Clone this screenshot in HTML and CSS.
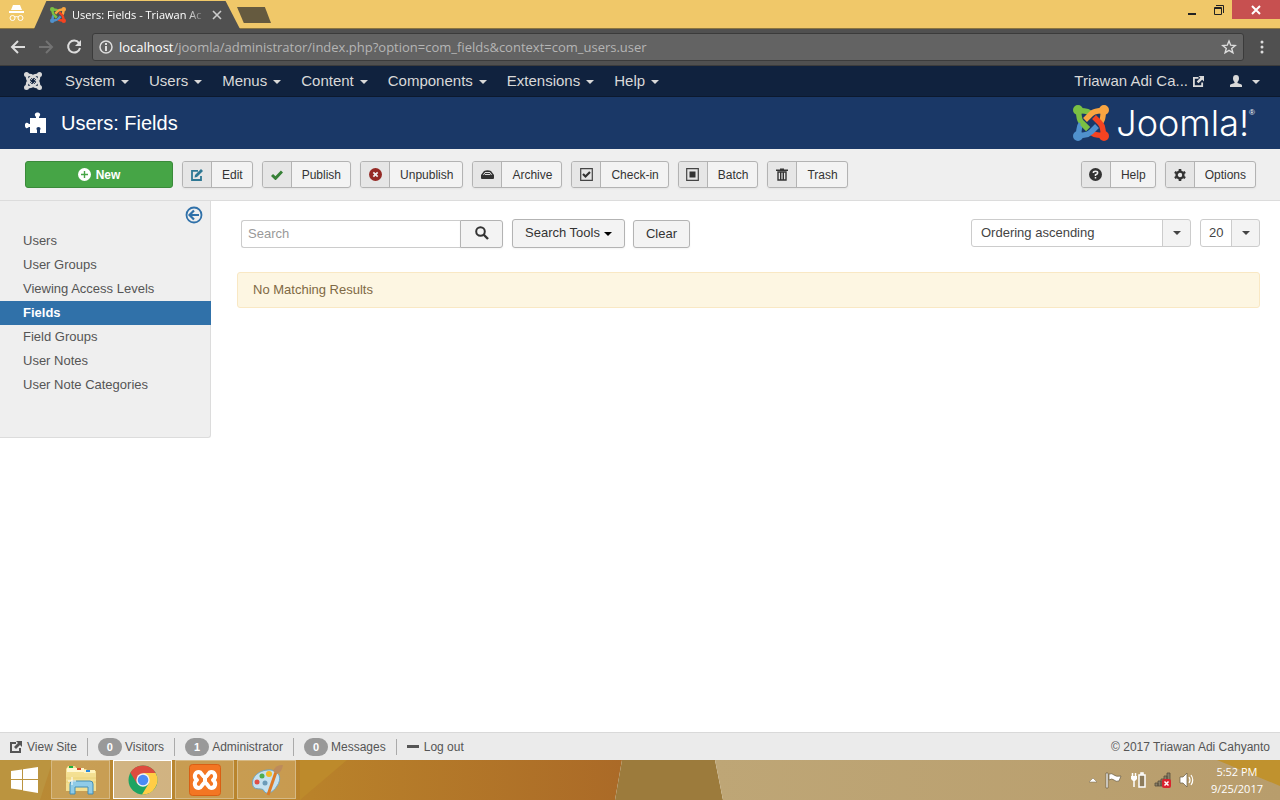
FILE: index.html
```html
<!DOCTYPE html>
<html lang="en">
<head>
  <meta charset="UTF-8" />
  <meta name="viewport" content="width=device-width, initial-scale=1.0" />
  <title>Users: Fields - Triawan Adi Cahyanto - Administration</title>
  <link rel="stylesheet" href="styles.css">
</head>
<body>
  <svg class="defs" width="0" height="0" aria-hidden="true">
    <defs>
      <g id="arm" fill="none">
        <path d="M5 5C7 12 5 14 9 18L15 24" />
        <path d="M5 5C12 7 13 5 17 8" />
        <circle cx="5" cy="5" r="2.500" stroke-width="5" />
      </g>
      <symbol id="joomla-color" viewBox="0 0 36 36">
        <g stroke-width="5.500">
          <use href="#arm" stroke="#7ac043" />
          <use href="#arm" stroke="#f9a541" transform="rotate(90 18 18)" />
          <use href="#arm" stroke="#f44321" transform="rotate(180 18 18)" />
          <use href="#arm" stroke="#5091cd" transform="rotate(270 18 18)" />
          <path d="M9 18L15 24" stroke="#7ac043" />
        </g>
      </symbol>
      <symbol id="joomla-mono" viewBox="0 0 36 36">
        <g stroke="#d9d9d9" stroke-width="5">
          <use href="#arm" />
          <use href="#arm" transform="rotate(90 18 18)" />
          <use href="#arm" transform="rotate(180 18 18)" />
          <use href="#arm" transform="rotate(270 18 18)" />
        </g>
        <path d="M8 19L17 28M17 8L8 17M19 8L28 17M28 19L19 28" stroke="#d9d9d9" stroke-width="5" />
        <path d="M12 16L16 12M20 12L24 16M24 20L20 24M16 24L12 20" stroke="#10223e" stroke-width="1.500" />
      </symbol>
      <symbol id="out" viewBox="0 0 12 12">
        <path d="M6 2H1V11H10V7" fill="none" stroke="currentColor" stroke-width="2" />
        <path d="M6 0H12V6L10 4L6 8L4 6L8 2Z" fill="currentColor" />
      </symbol>
    </defs>
  </svg>

  <!-- browser window -->
  <div class="tabs">
    <svg class="incognito" width="18" height="18" viewBox="0 0 18 18">
      <path d="M5 0H12L14 5H3ZM1 6H16V8H1Z" fill="#fff" />
      <g fill="none" stroke="#fff"><circle cx="4.500" cy="13" r="2.500" /><circle cx="12.500" cy="13" r="2.500" /><path d="M7 12Q8.500 11 10 12" /></g>
    </svg>
    <div class="tab">
      <svg width="16" height="16"><use href="#joomla-color" /></svg>
      <span class="tab-title">Users: Fields - Triawan Ac</span>
      <button class="tab-close" aria-label="Close tab"><svg width="10" height="10" viewBox="0 0 10 10"><path d="M1 1L9 9M9 1L1 9" stroke="#ccc" stroke-width="1.600" /></svg></button>
    </div>
    <button class="tab-new" aria-label="New tab"></button>
    <div class="window-buttons">
      <button aria-label="Minimize"><svg width="10" height="12" viewBox="0 0 10 12"><path d="M1 9H9V11H1Z" fill="#222" /></svg></button>
      <button aria-label="Restore"><svg width="12" height="12" viewBox="0 0 12 12"><path d="M3 1.500H10.500V9" fill="none" stroke="#222" /><path d="M1.500 3.500H8.500V10.500H1.500ZM1 4.500H9" fill="none" stroke="#222" /></svg></button>
      <button class="close" aria-label="Close"><svg width="10" height="10" viewBox="0 0 10 10"><path d="M1 1L9 9M9 1L1 9" stroke="#fff" stroke-width="2" /></svg></button>
    </div>
  </div>

  <div class="browser-bar">
    <button aria-label="Back"><svg width="16" height="16" viewBox="0 0 16 16"><path d="M15 8H2M8 2L2 8L8 14" fill="none" stroke="#ddd" stroke-width="2" /></svg></button>
    <button aria-label="Forward"><svg width="16" height="16" viewBox="0 0 16 16"><path d="M1 8H14M8 2L14 8L8 14" fill="none" stroke="#737373" stroke-width="2" /></svg></button>
    <button aria-label="Reload"><svg width="16" height="16" viewBox="0 0 16 16"><path d="M13 4A6 6 0 1 0 14 9" fill="none" stroke="#ddd" stroke-width="2" /><path d="M15 1V7H9Z" fill="#ddd" /></svg></button>
    <div class="address">
      <svg width="14" height="14" viewBox="0 0 14 14"><circle cx="7" cy="7" r="6" fill="none" stroke="#ddd" stroke-width="1.500" /><path d="M6 6H8V11H6ZM6 3H8V5H6Z" fill="#ddd" /></svg>
      <span class="url"><b>localhost</b>/joomla/administrator/index.php?option=com_fields&amp;context=com_users.user</span>
      <button aria-label="Bookmark"><svg width="16" height="16" viewBox="0 0 16 16"><path d="M8 2L9.700 6.200L14.200 6.500L10.700 9.400L11.900 13.800L8 11.300L4.100 13.800L5.300 9.400L1.800 6.500L6.300 6.200Z" fill="none" stroke="#ddd" stroke-width="1.400" /></svg></button>
    </div>
    <button class="dots" aria-label="Menu"><svg width="4" height="14" viewBox="0 0 4 14"><g fill="#ddd"><circle cx="2" cy="2" r="1.500" /><circle cx="2" cy="7" r="1.500" /><circle cx="2" cy="12" r="1.500" /></g></svg></button>
  </div>

  <nav class="navbar">
    <a class="nav-logo" href="#" aria-label="Control panel"><svg width="18" height="18"><use href="#joomla-mono" /></svg></a>
    <a class="caret" href="#">System</a>
    <a class="caret" href="#">Users</a>
    <a class="caret" href="#">Menus</a>
    <a class="caret" href="#">Content</a>
    <a class="caret" href="#">Components</a>
    <a class="caret" href="#">Extensions</a>
    <a class="caret" href="#">Help</a>
    <a class="nav-site" href="#">Triawan Adi Ca... <svg width="11" height="11"><use href="#out" /></svg></a>
    <a class="caret nav-user" href="#" aria-label="User menu"><svg width="12" height="12" viewBox="0 0 12 12"><path d="M6 0C8 0 9 1 9 3.500C9 5.500 8 6.500 7.500 7V8C9 9 12 9 12 10.500V12H0V10.500C0 9 3 9 4.500 8V7C4 6.500 3 5.500 3 3.500C3 1 4 0 6 0Z" fill="#d9d9d9" /></svg></a>
  </nav>

  <header class="header">
    <svg width="22" height="22" viewBox="0 0 22 22"><path d="M5 6H11V5C10 4 9.500 3 10 2C10.500 0 14.500 0 15 2C15.500 3 15 4 14 5V6H21V21H15V18C16 17 15.500 15 13.500 15C11.500 15 11 17 12 18V21H5V15H4C3 16 2 16.500 1 16C-.5 15 -.5 11.500 1 11C2 10.500 3 11 4 12H5Z" fill="#fff" /></svg>
    <h1>Users: Fields</h1>
    <a class="brand" href="#">
      <svg width="36" height="36"><use href="#joomla-color" /></svg>
      <span>Joomla!</span><sup>®</sup>
    </a>
  </header>

  <div class="toolbar">
    <button class="btn-new"><svg width="13" height="13" viewBox="0 0 13 13"><circle cx="6.500" cy="6.500" r="6.500" fill="#fff" /><path d="M6.500 3V10M3 6.500H10" stroke="#46a546" stroke-width="1.400" /></svg>New</button>
    <button class="btn-tool"><i><svg width="12" height="12" viewBox="0 0 12 12"><path d="M7 1.800H1V11H10V7" fill="none" stroke="#2f7894" stroke-width="1.800" /><path d="M10 0L12 2L6 8L3.500 8.500L4 6Z" fill="#2f7894" /></svg></i><span>Edit</span></button>
    <button class="btn-tool"><i><svg width="12" height="10" viewBox="0 0 12 10"><path d="M1 5L4.500 8.300L11 1.500" fill="none" stroke="#378137" stroke-width="3" /></svg></i><span>Publish</span></button>
    <button class="btn-tool"><i><svg width="13" height="13" viewBox="0 0 12 12"><circle cx="6" cy="6" r="6" fill="#942a25" /><path d="M4 4L8 8M8 4L4 8" stroke="#eee" stroke-width="1.600" /></svg></i><span>Unpublish</span></button>
    <button class="btn-tool"><i><svg width="13" height="9" viewBox="0 0 13 9"><path d="M0 5L3 1Q6.500 -.5 10 1L13 5V8Q13 9 12 9H1Q0 9 0 8Z" fill="#333" /><path d="M2.500 5L4 2.500H9L10.500 5M4 4.500H9" fill="none" stroke="#ddd" /></svg></i><span>Archive</span></button>
    <button class="btn-tool"><i><svg width="13" height="13" viewBox="0 0 13 13"><path d="M.7 .7H12.300V12.300H.7Z" fill="none" stroke="#444" stroke-width="1.200" /><path d="M3 6L5.500 8.500L10 4" fill="none" stroke="#333" stroke-width="2.200" /></svg></i><span>Check-in</span></button>
    <button class="btn-tool"><i><svg width="13" height="13" viewBox="0 0 13 13"><path d="M.7 .7H12.300V12.300H.7Z" fill="none" stroke="#444" stroke-width="1.200" /><path d="M3.500 3.500H9.500V9.500H3.500Z" fill="#333" /></svg></i><span>Batch</span></button>
    <button class="btn-tool"><i><svg width="12" height="13" viewBox="0 0 12 13"><path d="M0 1.500H4V.5H8V1.500H12V3H0Z" fill="#333" /><path d="M2 4V12H10V4ZM4.700 4V12M7.300 4V12" fill="none" stroke="#333" stroke-width="1.400" /></svg></i><span>Trash</span></button>
    <div class="toolbar-right">
      <button class="btn-tool"><i><svg width="13" height="13" viewBox="0 0 12 12"><circle cx="6" cy="6" r="6" fill="#333" /><path d="M4 4.500Q4 3 6 3Q8 3 8 4.500Q8 5.500 6 6.300V7.300M6 8.200V9.700" fill="none" stroke="#eee" stroke-width="1.400" /></svg></i><span>Help</span></button>
      <button class="btn-tool"><i><svg width="12" height="12" viewBox="0 0 12 12"><circle cx="6" cy="6" r="3.400" fill="none" stroke="#333" stroke-width="2.400" /><path d="M6 0V2M6 10V12M.8 3L2.500 4M9.500 8L11.200 9M.8 9L2.500 8M9.500 4L11.200 3" stroke="#333" stroke-width="2.600" /></svg></i><span>Options</span></button>
    </div>
  </div>

  <div class="container">
    <aside class="sidebar">
      <button class="sidebar-toggle" aria-label="Hide sidebar"><svg width="18" height="18" viewBox="0 0 18 18"><circle cx="9" cy="9" r="7.500" fill="none" stroke="#3071a9" stroke-width="1.800" /><path d="M14 9H5M9 4.500L4.500 9L9 13.500" fill="none" stroke="#3071a9" stroke-width="2.200" /></svg></button>
      <ul>
        <li><a href="#">Users</a></li>
        <li><a href="#">User Groups</a></li>
        <li><a href="#">Viewing Access Levels</a></li>
        <li class="active"><a href="#">Fields</a></li>
        <li><a href="#">Field Groups</a></li>
        <li><a href="#">User Notes</a></li>
        <li><a href="#">User Note Categories</a></li>
      </ul>
    </aside>

    <main class="content">
      <form class="filters">
        <div class="search">
          <input type="text" placeholder="Search" aria-label="Search" />
          <button type="button" aria-label="Search"><svg width="14" height="14" viewBox="0 0 14 14"><circle cx="5.500" cy="5.500" r="4.300" fill="none" stroke="#333" stroke-width="2" /><path d="M8.500 8.500L13 13" stroke="#333" stroke-width="2.400" /></svg></button>
        </div>
        <button type="button" class="btn btn-tools">Search Tools</button>
        <button type="button" class="btn">Clear</button>
        <div class="select ordering">
          <select aria-label="Ordering"><option>Ordering ascending</option><option>Ordering descending</option></select>
        </div>
        <div class="select limit">
          <select aria-label="Limit"><option>20</option><option>50</option><option>100</option></select>
        </div>
      </form>
      <div class="alert">No Matching Results</div>
    </main>
  </div>

  <footer class="status">
    <a href="#"><svg width="12" height="12"><use href="#out" /></svg>View Site</a>
    <span class="count"><b>0</b>Visitors</span>
    <span class="count"><b>1</b>Administrator</span>
    <span class="count"><b>0</b>Messages</span>
    <a href="#"><svg width="12" height="4" viewBox="0 0 12 4"><path d="M0 0H12V3H0Z" fill="currentColor" /></svg>Log out</a>
    <span class="copyright">© 2017 Triawan Adi Cahyanto</span>
  </footer>

  <!-- desktop taskbar -->
  <div class="taskbar">
    <svg class="wallpaper" viewBox="0 0 1280 40" preserveAspectRatio="none">
      <defs>
        <linearGradient id="gold"><stop offset="0" stop-color="#b98b36" /><stop offset=".5" stop-color="#b9822a" /><stop offset="1" stop-color="#ab6a27" /></linearGradient>
        <linearGradient id="sand"><stop offset="0" stop-color="#bea676" /><stop offset="1" stop-color="#b89d6c" /></linearGradient>
      </defs>
      <path d="M0 0H622L615 40H0Z" fill="url(#gold)" />
      <path d="M0 0H53L40 40H0Z" fill="#bb943f" />
      <path d="M300 0H347L300 40Z" fill="#bd8a2b" />
      <path d="M622 0H715L723 40H615Z" fill="#9c7b3c" />
      <path d="M715 0H1280V40H723Z" fill="url(#sand)" />
      <path d="M1217 0H1280V26Z" fill="#c0922e" />
    </svg>
    <button class="start" aria-label="Start"><svg width="28" height="26" viewBox="0 0 28 26"><path d="M0 4L11 2.500V12H0ZM12 2.300L27 0V12H12ZM0 13H11V23L0 21.500ZM12 13H27V26L12 23.500Z" fill="#fff" /></svg></button>
    <button class="app" aria-label="File Explorer">
      <svg width="34" height="32" viewBox="0 0 34 32"><path d="M4 2H11L13 5H22L24 7H32V27H2V5Z" fill="#f4e093" /><path d="M3 4H12V8H3Z" fill="#fff7cf" /><path d="M5 2H9V4H5Z" fill="#19b340" /><path d="M12 4H20V8H12Z" fill="#fff7cf" /><path d="M13 4H17V6H13Z" fill="#d74a2a" /><path d="M20 6H31V9H20Z" fill="#fff4bd" /><path d="M22 6H26V8H22Z" fill="#2b8ade" /><path d="M2 10H32V27H2Z" fill="#f3df91" /><path d="M2 14H32M2 18H32" stroke="#ead279" /><path d="M6 30V20Q6 17 9 17H26Q29 17 29 20V30H24V23H11V30Z" fill="#8fcbe7" stroke="#438eb5" /><path d="M8 13V21M4 17H12" stroke="#fff" /></svg>
    </button>
    <button class="app current" aria-label="Chrome">
      <svg width="30" height="30" viewBox="0 0 30 30"><circle cx="15" cy="15" r="14.500" fill="#1da462" /><path d="M15 15L2.400 7.800A14.500 14.500 0 0 1 27.600 8H15Z" fill="#dd4b3e" /><path d="M2.400 7.800L9 18.500L15 15L12 8Z" fill="#dd4b3e" /><path d="M15 8H27.600A14.500 14.500 0 0 1 14 29.500L21 18Z" fill="#ffcd46" /><circle cx="15" cy="15" r="6.700" fill="#f2f2f2" /><circle cx="15" cy="15" r="5.300" fill="#4a8bf5" /></svg>
    </button>
    <button class="app" aria-label="XAMPP">
      <svg width="32" height="32" viewBox="0 0 32 32"><rect x=".5" y=".5" width="31" height="31" rx="3" fill="#f37623" stroke="#d95f14" /><path d="M8 16C4 13 6 8 10 8C13 8 13 13 16 13C19 13 19 8 22 8C26 8 28 13 24 16C28 19 26 24 22 24C19 24 19 19 16 19C13 19 13 24 10 24C6 24 4 19 8 16Z" fill="none" stroke="#fff" stroke-width="4" stroke-linejoin="round" /><path d="M14 13H18V19H14Z" fill="#fff" /></svg>
    </button>
    <button class="app" aria-label="Paint">
      <svg width="32" height="32" viewBox="0 0 32 32"><path d="M2 22C-1 13 9 5 20 6C29 7 31 15 26 22C22 29 15 31 13 27C12 23 4 27 2 22Z" fill="#c6e1ef" stroke="#6fa6c4" /><circle cx="6" cy="18" r="2.500" fill="#df4f45" /><circle cx="11" cy="12" r="2.500" fill="#4fad50" /><circle cx="18" cy="10" r="3" fill="#f3b927" /><circle cx="14" cy="19" r="2.500" fill="#6c9bb8" /><path d="M25 8L17 31" stroke="#dc7a28" stroke-width="3" /><path d="M22 7Q25 0 32 1Q31 8 26 10Z" fill="#bd8b5b" /></svg>
    </button>
    <div class="tray">
      <svg width="10" height="6" viewBox="0 0 10 6"><path d="M1 5L5 1L9 5Z" fill="#fff" stroke="#776a50" stroke-width=".5" /></svg>
      <svg width="18" height="17" viewBox="0 0 18 17"><path d="M1 1H3V16H1ZM4 2Q7 1 9 3T16 4L14 9Q11 10 9 8T4 8Z" fill="#fff" stroke="#655a44" stroke-width=".7" /></svg>
      <svg width="17" height="17" viewBox="0 0 17 17"><path d="M2.500 1V4M5.500 1V4M4 8V15" fill="none" stroke="#fff" stroke-width="1.500" /><path d="M1 4H7V7L5 9H3L1 7Z" fill="#fff" /><path d="M9 3H15V15H9ZM11 1H13V3H11Z" fill="#8d7c5c" stroke="#fff" stroke-width="1.500" /></svg>
      <svg width="18" height="17" viewBox="0 0 18 17"><path d="M1 11H4V14H1ZM4 9H7V14H4ZM7 7H10V14H7ZM10 4H13V14H10ZM13 1H16V14H13Z" fill="#8a8069" stroke="#554c3b" stroke-width=".8" /><rect x="8" y="7" width="9" height="9" rx="2" fill="#d9232e" /><path d="M10.500 9.500L14.500 13.500M14.500 9.500L10.500 13.500" stroke="#fff" stroke-width="1.500" /></svg>
      <svg width="17" height="16" viewBox="0 0 17 16"><path d="M1 5H4L8 1V15L4 11H1Z" fill="#fff" stroke="#655a44" stroke-width=".7" /><path d="M10 5Q12 8 10 11M12 3Q15.500 8 12 13" fill="none" stroke="#fff" stroke-width="1.200" /></svg>
      <div class="clock">5:52 PM<br />9/25/2017</div>
    </div>
  </div>
</body>
</html>
```
FILE: styles.css
```css
* {
  box-sizing: border-box;
}
body {
  margin: 0;
  min-height: 100vh;
  display: flex;
  flex-direction: column;
  background: #fff;
  color: #333;
  font-family: "Liberation Sans", Arial, sans-serif;
  font-size: 13px;
  line-height: 18px;
}
svg {
  display: block;
  flex-shrink: 0;
}
a {
  color: inherit;
  text-decoration: none;
}
button {
  font: inherit;
  color: inherit;
  background: none;
  border: 0;
  padding: 0;
  cursor: pointer;
}
.defs {
  position: absolute;
}

/* browser window */
.tabs {
  display: flex;
  height: 29px;
  background: #f0c869;
  border-bottom: 1px solid #8b7641;
  font-family: "Open Sans", sans-serif;
  font-size: 11px;
}
.incognito {
  margin: 5px 8px 0;
}
.tab {
  display: flex;
  align-items: center;
  gap: 6px;
  width: 206px;
  height: 28px;
  margin-top: 1px;
  padding: 0 18px 0 16px;
  background: #505050;
  color: #fff;
  clip-path: polygon(6% 0, 93% 0, 100% 100%, 0 100%);
}
.tab-title {
  flex: 1;
  white-space: nowrap;
  -webkit-mask-image: linear-gradient(90deg, #000 85%, transparent);
  mask-image: linear-gradient(90deg, #000 85%, transparent);
}
.tab-new {
  width: 34px;
  height: 16px;
  margin: 7px 0 0 -3px;
  background: #655a3f;
  clip-path: polygon(0 0, 82% 0, 100% 100%, 20% 100%);
}
.window-buttons {
  display: flex;
  align-items: flex-start;
  margin-left: auto;
}
.window-buttons button {
  display: grid;
  place-items: center;
  width: 27px;
  height: 19px;
}
.window-buttons .close {
  width: 48px;
  background: #c75050;
}
.browser-bar {
  display: flex;
  align-items: center;
  gap: 12px;
  height: 37px;
  padding: 0 12px 0 10px;
  background: #505050;
  border-bottom: 1px solid #3c3c3c;
}
.address {
  flex: 1;
  display: flex;
  align-items: center;
  gap: 6px;
  height: 28px;
  margin-left: -2px;
  padding: 0 6px;
  background: #636363;
  border: 1px solid #3b3b3b;
  border-radius: 3px;
  color: #b5b5b5;
  font-family: "Open Sans", sans-serif;
  font-size: 13px;
}
.address .url {
  flex: 1;
  white-space: nowrap;
}
.address b {
  color: #fff;
  font-weight: normal;
}
.dots {
  padding: 0 4px;
}

/* admin menu */
.navbar {
  display: flex;
  align-items: center;
  gap: 20px;
  height: 31px;
  padding: 0 20px 0 24px;
  background: #10223e;
  border-bottom: 1px solid #0c192e;
  color: #d9d9d9;
  font-size: 15px;
}
.nav-logo {
  margin-right: 3px;
}
.caret {
  display: flex;
  align-items: center;
  gap: 6px;
}
.caret::after {
  content: "";
  margin-top: 2px;
  border: 4px solid transparent;
  border-top-color: currentColor;
  border-bottom: 0;
}
.nav-site {
  display: flex;
  align-items: center;
  gap: 5px;
  margin-left: auto;
}
.nav-user {
  gap: 10px;
  margin-left: 6px;
}
.header {
  display: flex;
  align-items: center;
  gap: 14px;
  height: 52px;
  padding: 0 25px;
  background: #1a3867;
  color: #fff;
}
h1 {
  margin: 0;
  font-size: 20px;
  font-weight: normal;
  line-height: 24px;
}
.brand {
  display: flex;
  align-items: center;
  margin-left: auto;
}
.brand span {
  margin-left: 7px;
  font-family: Inter, "DejaVu Sans", sans-serif;
  font-size: 36px;
  font-weight: 300;
  line-height: 36px;
}
.brand sup {
  align-self: flex-start;
  font-size: 8px;
  line-height: 16px;
}

/* toolbar */
.toolbar {
  display: flex;
  align-items: center;
  gap: 9px;
  height: 52px;
  padding: 0 24px 0 25px;
  background: #efefef;
  border-bottom: 1px solid #dcdcdc;
  font-size: 12px;
}
.toolbar-right {
  display: flex;
  gap: 9px;
  margin-left: auto;
}
.btn-new {
  display: flex;
  align-items: center;
  justify-content: center;
  gap: 5px;
  width: 148px;
  height: 27px;
  background: #46a546;
  border: 1px solid #3a8a3a;
  border-radius: 3px;
  color: #fff;
  font-weight: bold;
}
.btn-tool {
  display: flex;
  height: 27px;
  background: #f3f3f3;
  border: 1px solid #b3b3b3;
  border-radius: 3px;
  box-shadow: 0 1px 2px rgba(0, 0, 0, 0.05);
  line-height: 26px;
}
.btn-tool i {
  display: grid;
  place-items: center;
  width: 29px;
  height: 25px;
  background: #e6e6e6;
  border-right: 1px solid #b3b3b3;
  border-radius: 2px 0 0 2px;
}
.btn-tool span {
  padding: 0 9px 0 10px;
}

/* page */
.container {
  flex: 1;
  display: flex;
  align-items: flex-start;
}
.sidebar {
  width: 211px;
  padding: 5px 0 40px;
  background: #efefef;
  border: 1px solid #dcdcdc;
  border-width: 0 1px 1px 0;
  border-radius: 0 0 3px 0;
}
.sidebar-toggle {
  display: block;
  margin: 0 7px 5px auto;
}
.sidebar ul {
  margin: 0;
  padding: 0;
  list-style: none;
}
.sidebar a {
  display: block;
  padding: 3px 23px;
  color: #555;
}
.sidebar .active {
  margin-right: -1px;
  background: #3071a9;
}
.sidebar .active a {
  color: #fff;
  font-weight: bold;
}
.content {
  flex: 1;
  padding: 18px 20px 18px 26px;
}
.filters {
  display: flex;
  align-items: flex-end;
  height: 29px;
  padding-left: 4px;
}
.search {
  display: flex;
  margin-right: 9px;
}
.search input {
  width: 219px;
  height: 28px;
  padding: 0 6px 1px;
  border: 1px solid #ccc;
  border-right: 0;
  border-radius: 3px 0 0 3px;
  font: inherit;
}
.search input::placeholder {
  color: #999;
}
.search button,
.btn {
  height: 28px;
  padding: 0 12px;
  background: #f3f3f3;
  border: 1px solid #b3b3b3;
  border-radius: 3px;
  box-shadow: 0 1px 2px rgba(0, 0, 0, 0.05);
}
.search button {
  width: 43px;
  border-radius: 0 3px 3px 0;
}
.search svg {
  margin: -2px auto 0;
}
.btn-tools {
  height: 29px;
  margin-right: 8px;
  padding-bottom: 2px;
}
.btn-tools::after {
  content: "";
  display: inline-block;
  margin-left: 4px;
  vertical-align: 1px;
  border: 4px solid transparent;
  border-top-color: #000;
  border-bottom: 0;
}
.select {
  position: relative;
  align-self: flex-start;
}
.select select {
  width: 100%;
  height: 28px;
  padding: 0 36px 0 9px;
  appearance: none;
  background: linear-gradient(90deg, #ccc 1px, #f3f3f3 1px) right / 28px 100% no-repeat #fff;
  border: 1px solid #ccc;
  border-radius: 3px;
  color: #444;
  font: inherit;
}
.select::after {
  content: "";
  position: absolute;
  right: 10px;
  top: 12px;
  border: 4px solid transparent;
  border-top-color: #444;
  border-bottom: 0;
  pointer-events: none;
}
.ordering {
  width: 220px;
  margin-left: auto;
  margin-right: 9px;
}
.limit {
  width: 60px;
}
.limit select {
  padding: 0 28px 0 8px;
}
.alert {
  margin-top: 24px;
  padding: 8px 15px;
  background: #fdf6e2;
  border: 1px solid #f9e8c4;
  border-radius: 3px;
  color: #7f6944;
}

/* status bar */
.status {
  display: flex;
  align-items: center;
  height: 28px;
  padding: 0 10px;
  background: #ebebeb;
  border-top: 1px solid #d9d9d9;
  color: #555;
  font-size: 12px;
  line-height: 16px;
}
.status a,
.count {
  display: flex;
  align-items: center;
  gap: 5px;
}
.status a + .count,
.count + .count,
.count + a {
  margin-left: 10px;
  padding-left: 10px;
  border-left: 1px solid #aaa;
}
.count {
  gap: 3px;
}
.count b {
  padding: 1px 9px;
  background: #999;
  border-radius: 9px;
  color: #fff;
  font-size: 11px;
}
.copyright {
  margin-left: auto;
}

/* desktop taskbar */
.taskbar {
  position: relative;
  display: flex;
  gap: 3px;
  height: 40px;
  padding-left: 11px;
  overflow: hidden;
}
.wallpaper {
  position: absolute;
  inset: 0;
  width: 100%;
  height: 100%;
}
.taskbar button,
.tray {
  position: relative;
}
.start {
  width: 37px;
}
.app {
  display: grid;
  place-items: center;
  width: 59px;
  height: 39px;
  background: rgba(230, 200, 150, 0.35);
  border: 1px solid #d6b985;
}
.app.current {
  background: rgba(225, 210, 185, 0.6);
  border-color: #fff;
}
.tray {
  display: flex;
  align-items: center;
  gap: 7px;
  margin-left: auto;
  padding-right: 17px;
}
.clock {
  margin-left: 8px;
  color: #fff;
  font-family: "Open Sans", sans-serif;
  font-size: 11px;
  line-height: 17px;
  text-align: center;
}
```
